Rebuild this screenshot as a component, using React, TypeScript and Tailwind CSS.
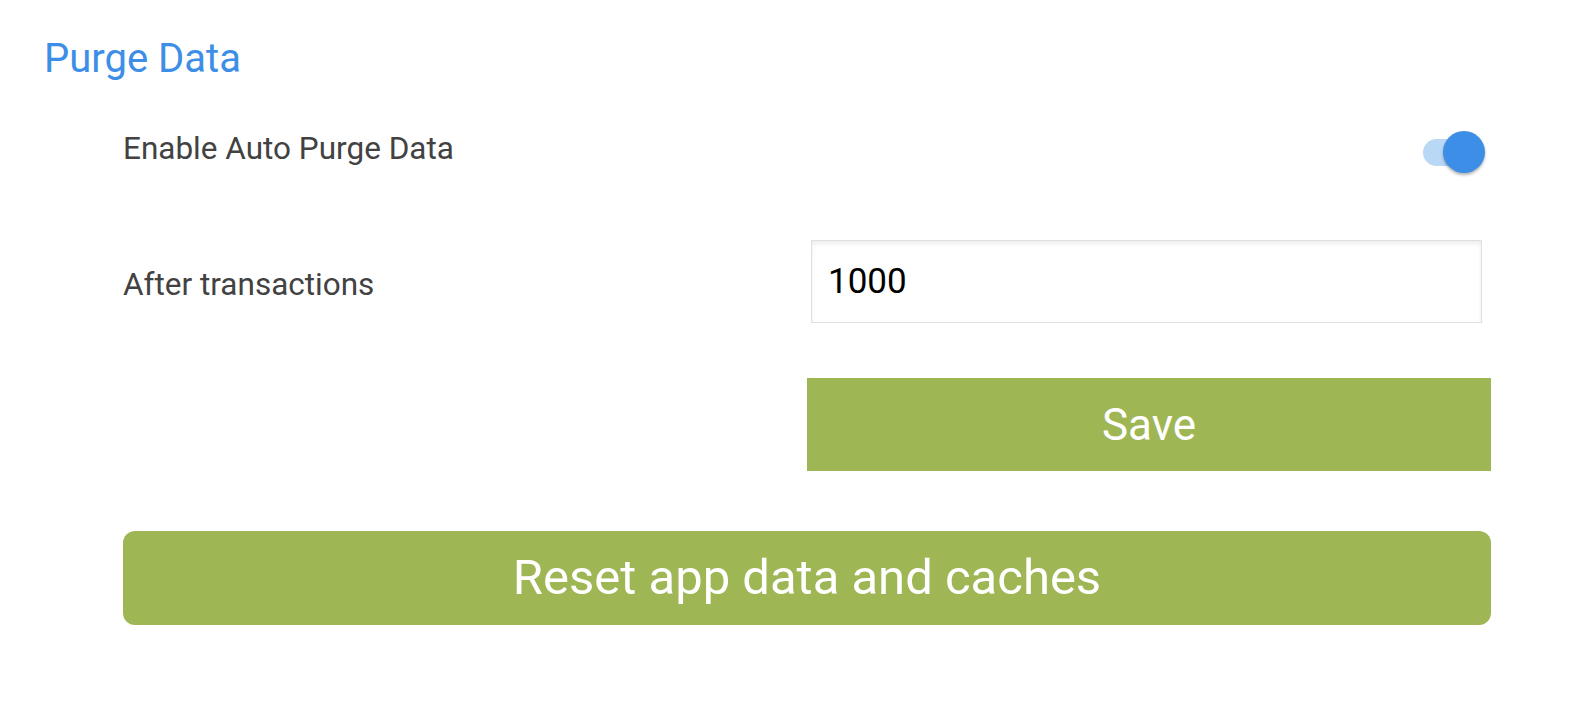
import { useState } from "react";

export default function App() {
  const [autoPurge, setAutoPurge] = useState(true);
  const [limit, setLimit] = useState("1000");

  return (
    <div className="w-[1594px] h-[718px] bg-white font-['Roboto','Liberation_Sans',sans-serif]">
      {/* Section title */}
      <h2 className="pl-[44px] pt-[37px] h-[80px] text-[40px] leading-[44px] text-[#3d8ee6]">
        Purge Data
      </h2>

      <div className="pl-[123px] pr-[103px]">
        {/* Auto purge toggle */}
        <div className="mt-[40px] h-[60px] flex items-center justify-between pr-[6px]">
          <span className="text-[31.5px] text-[#424242] -mt-[2px]">Enable Auto Purge Data</span>
          <button
            onClick={() => setAutoPurge(!autoPurge)}
            className="relative w-[62px] h-[42px] mt-[4px]"
          >
            <span className="absolute left-0 top-[8px] w-[44px] h-[27px] rounded-full bg-[#b9d8f5]" />
            <span className="absolute right-0 top-0 w-[42px] h-[42px] rounded-full bg-[#3d8ee6] shadow-[0_2px_3px_rgba(0,0,0,0.3)]" />
          </button>
        </div>

        {/* Transactions limit */}
        <div className="mt-[60px] h-[83px] flex items-center justify-between pr-[9px]">
          <span className="text-[31.5px] text-[#424242] pt-[6px]">After transactions</span>
          <input
            value={limit}
            onChange={(e) => setLimit(e.target.value)}
            className="w-[671px] h-[83px] px-[16px] border border-[#e0e0e0] shadow-[inset_0_3px_4px_rgba(0,0,0,0.07)] text-[35px] text-black outline-none font-['Roboto',sans-serif]"
          />
        </div>

        <div className="mt-[55px] flex justify-end">
          <button className="w-[684px] h-[93px] bg-[#9fb655] text-white text-[44px]">
            Save
          </button>
        </div>

        <button className="mt-[60px] w-full h-[94px] rounded-[12px] bg-[#9fb655] text-white text-[49px]">
          Reset app data and caches
        </button>
      </div>
    </div>
  );
}
